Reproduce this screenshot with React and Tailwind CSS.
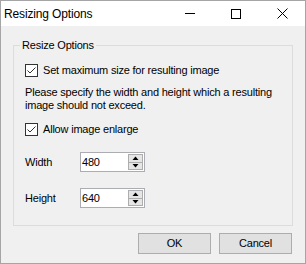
import React from "react";

function Check() {
  return (
    <span className="flex h-[13px] w-[13px] shrink-0 items-center justify-center border border-[#333333] bg-white">
      <svg width="11" height="11" viewBox="0 0 11 11">
        <path d="M1.5 5.5 L4 8 L9.5 2.5" fill="none" stroke="#333333" strokeWidth="1" />
      </svg>
    </span>
  );
}

function Spin({ value }) {
  return (
    <div className="flex h-[20px] w-[65px] items-stretch border border-[#abadb3] bg-white">
      <div className="flex flex-1 items-center pl-[1px] text-[11px] leading-[13px] text-black">{value}</div>
      <div className="my-[1px] mr-[1px] flex w-[15px] flex-col gap-0">
        <div className="flex flex-1 items-center justify-center border border-[#adadad] bg-[#e5e5e5]">
          <svg width="7" height="4" viewBox="0 0 7 4"><path d="M0.5 4 L3.5 0.5 L6.5 4 Z" fill="#000" /></svg>
        </div>
        <div className="flex flex-1 items-center justify-center border border-t-0 border-[#adadad] bg-[#e5e5e5]">
          <svg width="7" height="4" viewBox="0 0 7 4"><path d="M0.5 0 L3.5 3.5 L6.5 0 Z" fill="#000" /></svg>
        </div>
      </div>
    </div>
  );
}

export default function App() {
  return (
    <div
      className="flex h-[264px] w-[306px] flex-col border border-[#a5a5a5] bg-[#f0f0f0] text-[11px] leading-[13px] tracking-[-0.2px] text-black"
      style={{ fontFamily: '"Liberation Sans", Arial, sans-serif' }}
    >
      <div className="flex h-[25px] items-center bg-white">
        <span className="ml-[3px] text-[12px] leading-[16px] tracking-[-0.15px] text-black">Resizing Options</span>
        <div className="ml-auto flex h-full items-center">
          <div className="flex h-full w-[46px] items-center justify-center">
            <span className="block h-[1px] w-[10px] bg-black" />
          </div>
          <div className="flex h-full w-[46px] items-center justify-center">
            <span className="block h-[10px] w-[10px] border border-black" />
          </div>
          <div className="flex h-full w-[46px] items-center justify-center">
            <svg width="11" height="11" viewBox="0 0 11 11">
              <path d="M0.5 0.5 L10.5 10.5 M10.5 0.5 L0.5 10.5" stroke="#000" strokeWidth="1" />
            </svg>
          </div>
        </div>
      </div>

      <div className="flex flex-1 flex-col pl-[12px]">
        <div className="relative mt-[19px] h-[181px] w-[280px] border border-[#dcdcdc] pl-[11px] pt-[18px]">
          <span className="absolute left-[6px] top-[-7px] bg-[#f0f0f0] px-[2px]">Resize Options</span>
          <div className="flex h-[13px] items-center gap-[5px]">
            <Check />
            <span>Set maximum size for resulting image</span>
          </div>
          <p className="mt-[9px]">
            Please specify the width and height which a resulting
            <br />
            image should not exceed.
          </p>
          <div className="mt-[11px] flex h-[13px] items-center gap-[5px]">
            <Check />
            <span>Allow image enlarge</span>
          </div>
          <div className="mt-[16px] flex items-center">
            <span className="w-[55px]">Width</span>
            <Spin value="480" />
          </div>
          <div className="mt-[16px] flex items-center">
            <span className="w-[55px]">Height</span>
            <Spin value="640" />
          </div>
        </div>

        <div className="mt-[7px] flex w-[280px] justify-end gap-[8px] pr-[1px]">
          <button className="h-[21px] w-[73px] border border-[#adadad] bg-[#e1e1e1] text-[11px] text-black">OK</button>
          <button className="h-[21px] w-[73px] border border-[#adadad] bg-[#e1e1e1] text-[11px] text-black">Cancel</button>
        </div>
      </div>
    </div>
  );
}
